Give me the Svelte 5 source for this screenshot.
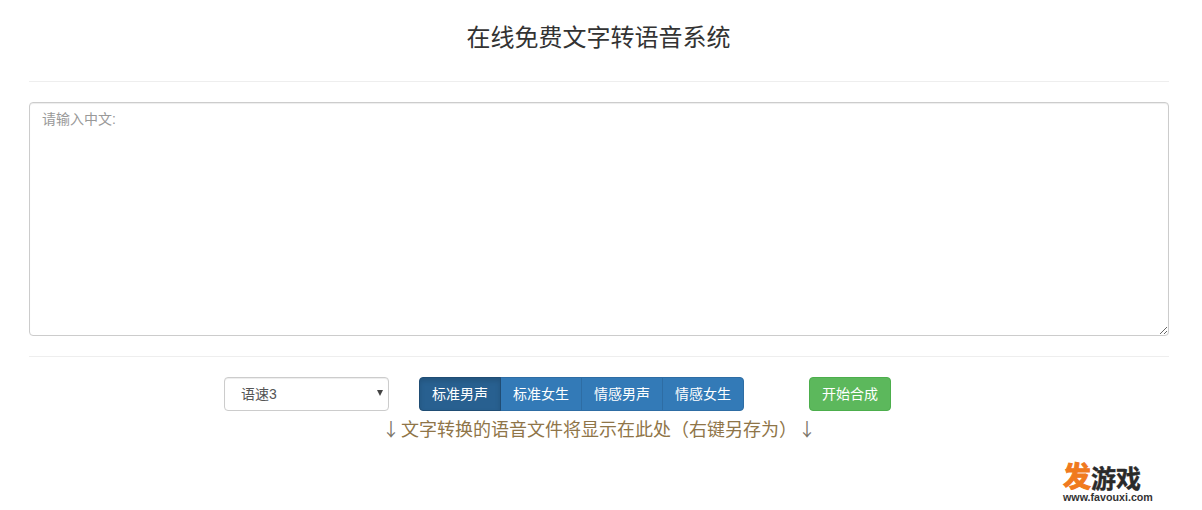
<script lang="ts">
  const voices = ['标准男声', '标准女生', '情感男声', '情感女生'];
  let active = $state(0);
  let speed = $state('3');
  let text = $state('');
</script>

<div class="container">
  <h3 class="title">在线免费文字转语音系统</h3>
  <hr />
  <textarea class="input" placeholder="请输入中文:" bind:value={text}></textarea>
  <hr />
  <div class="controls">
    <div class="select-wrap">
      <select class="speed" bind:value={speed}>
        <option value="1">语速1</option>
        <option value="2">语速2</option>
        <option value="3">语速3</option>
        <option value="4">语速4</option>
        <option value="5">语速5</option>
      </select>
    </div>
    <div class="btn-group">
      {#each voices as voice, i}
        <button class="btn voice" class:active={active === i} onclick={() => (active = i)}>{voice}</button>
      {/each}
    </div>
    <button class="btn start">开始合成</button>
  </div>
  <p class="hint"><span class="arrow left">↓</span><span>文字转换的语音文件将显示在此处（右键另存为）</span><span class="arrow right">↓</span></p>
</div>

<div class="watermark">
  <div class="wm-top"><span class="wm-fa">发</span><span class="wm-game">游戏</span></div>
  <div class="wm-url">www.favouxi.com</div>
</div>

<style>
  :global(body) {
    background: #fff;
    font-family: "Liberation Sans", "Noto Sans CJK SC", sans-serif;
    color: #333;
  }

  .container {
    box-sizing: border-box;
    width: 1202px;
    height: 510px;
    padding: 0 33px 0 29px;
    overflow: hidden;
  }

  .title {
    margin: 20px 0 0;
    height: 36px;
    font-size: 24px;
    line-height: 36px;
    font-weight: 400;
    text-align: center;
    padding-right: 1px;
  }

  hr {
    margin: 25px 0 20px;
    border: 0;
    border-top: 1px solid #eee;
  }

  .input {
    display: block;
    box-sizing: border-box;
    width: 100%;
    height: 234px;
    margin: 0;
    padding: 6px 12px;
    border: 1px solid #ccc;
    border-radius: 4px;
    box-shadow: inset 0 1px 1px rgba(0, 0, 0, 0.075);
    font: inherit;
    font-size: 14px;
    line-height: 20px;
    color: #555;
    outline: none;
  }

  .input::placeholder {
    color: #999;
    opacity: 1;
  }

  .input + hr {
    margin-top: 20px;
  }

  .controls {
    display: flex;
    align-items: center;
    padding-left: 195px;
  }

  .select-wrap {
    position: relative;
    width: 165px;
    height: 34px;
  }

  /* native arrow is too wide, this is the small triangle */
  .select-wrap::after {
    content: '';
    position: absolute;
    right: 6px;
    top: 13px;
    border-left: 3px solid transparent;
    border-right: 3px solid transparent;
    border-top: 6px solid #444;
    pointer-events: none;
  }

  .speed {
    box-sizing: border-box;
    width: 100%;
    height: 34px;
    padding: 6px 16px;
    border: 1px solid #ccc;
    border-radius: 4px;
    background: #fff;
    box-shadow: inset 0 1px 1px rgba(0, 0, 0, 0.075);
    font: inherit;
    font-size: 14px;
    color: #555;
    appearance: none;
    outline: none;
  }

  .btn-group {
    display: flex;
    margin-left: 30px;
  }

  .btn {
    box-sizing: border-box;
    height: 34px;
    padding: 6px 12px;
    border: 1px solid transparent;
    border-radius: 4px;
    font: inherit;
    font-size: 14px;
    line-height: 20px;
    color: #fff;
    cursor: pointer;
    white-space: nowrap;
  }

  .voice {
    width: 82px;
    margin-left: -1px;
    background: #337ab7;
    border-color: #2e6da4;
    border-radius: 0;
  }

  .voice:first-child {
    margin-left: 0;
    border-radius: 4px 0 0 4px;
  }

  .voice:last-child {
    border-radius: 0 4px 4px 0;
  }

  .voice.active {
    position: relative;
    background: #286090;
    border-color: #204d74;
    box-shadow: inset 0 3px 5px rgba(0, 0, 0, 0.125);
  }

  .start {
    width: 82px;
    margin-left: 65px;
    background: #5cb85c;
    border-color: #4cae4c;
  }

  .hint {
    margin: 5px 0 0;
    font-family: "Noto Sans CJK SC", sans-serif;
    font-size: 18px;
    line-height: 25px;
    text-align: center;
    color: #8f7548;
    white-space: pre;
  }

  .arrow {
    color: #7a7468;
  }

  .arrow.left {
    margin-right: 1px;
  }

  .arrow.right {
    margin-left: 1px;
  }

  .watermark {
    position: absolute;
    left: 1063px;
    top: 463px;
    width: 92px;
  }

  .wm-top {
    display: flex;
    align-items: flex-end;
    height: 29px;
    line-height: 29px;
    font-weight: 700;
  }

  .wm-fa {
    font-size: 28px;
    color: #f07a1e;
    -webkit-text-stroke: 1px #f07a1e;
  }

  .wm-game {
    font-size: 25px;
    line-height: 25px;
    color: #2a2a2a;
    -webkit-text-stroke: 0.4px #2a2a2a;
  }

  .wm-url {
    font-family: "Liberation Sans", sans-serif;
    font-size: 10.7px;
    line-height: 10px;
    font-weight: 700;
    color: #333;
    white-space: nowrap;
  }
</style>
